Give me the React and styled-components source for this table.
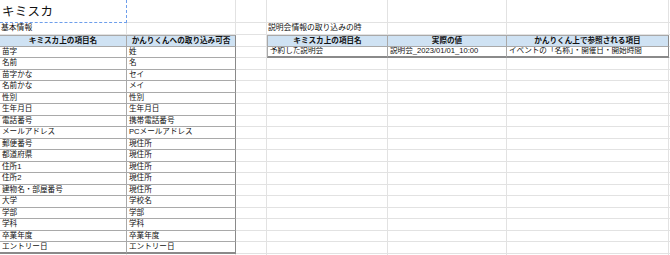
import React from "react";
import styled, { createGlobalStyle, css } from "styled-components";

const Global = createGlobalStyle`
  html, body { margin: 0; padding: 0; background: #ffffff; }
  body { font-family: "Liberation Sans", "Noto Sans CJK JP", sans-serif; }
`;

const GRID = "#e2e2e2";
const RULE = "#a9a9a9";
const EDGE = "#8a8a8a";

const Sheet = styled.div`
  display: grid;
  grid-template-columns: 127px 109px 31px 121px 119px 162px 1fr;
  grid-template-rows: 23px 11.5px 12px repeat(18, 11.5px) 20px;
  width: 670px;
  height: 255px;
  overflow: hidden;
  color: #111;
`;

const Cell = styled.div`
  box-sizing: border-box;
  display: flex;
  align-items: center;
  min-width: 0;
  padding: 0 2px;
  font-size: 7.6px;
  line-height: 1;
  white-space: nowrap;
  overflow: hidden;
  border-right: 1px solid ${GRID};
  border-bottom: 1px solid ${GRID};

  ${(p) =>
    p.$kind === "title" &&
    css`
      font-size: 12.5px;
      align-items: flex-end;
      padding: 0 2px 4px;
      border-right: 1px dashed #6d9eeb;
      border-bottom: 1px dashed #6d9eeb;
      letter-spacing: 0.3px;
    `}

  ${(p) =>
    p.$kind === "label" &&
    css`
      font-size: 7.8px;
      padding-left: 1px;
    `}

  ${(p) =>
    p.$kind === "head" &&
    css`
      background: #cfe2f3;
      font-weight: 700;
      justify-content: center;
      border-top: 1px solid ${RULE};
      border-right-color: ${RULE};
      border-bottom-color: ${RULE};
    `}

  ${(p) =>
    p.$kind === "data" &&
    css`
      border-right-color: ${RULE};
      border-bottom-color: ${RULE};
    `}

  ${(p) => p.$left && css`border-left: 1px solid ${RULE};`}
  ${(p) => p.$edgeRight && css`border-right: 1px solid ${EDGE};`}
  ${(p) => p.$edgeBottom && css`border-bottom: 2px solid ${EDGE};`}
`;

const basic = [
  ["苗字", "姓"],
  ["名前", "名"],
  ["苗字かな", "セイ"],
  ["名前かな", "メイ"],
  ["性別", "性別"],
  ["生年月日", "生年月日"],
  ["電話番号", "携帯電話番号"],
  ["メールアドレス", "PCメールアドレス"],
  ["郵便番号", "現住所"],
  ["都道府県", "現住所"],
  ["住所1", "現住所"],
  ["住所2", "現住所"],
  ["建物名・部屋番号", "現住所"],
  ["大学", "学校名"],
  ["学部", "学部"],
  ["学科", "学科"],
  ["卒業年度", "卒業年度"],
  ["エントリー日", "エントリー日"],
];

const eventHead = ["キミスカ上の項目名", "実際の値", "かんりくん上で参照される項目"];
const eventRow = ["予約した説明会", "説明会_2023/01/01_10:00", "イベントの「名称」・開催日・開始時間"];

function Blank({ n }) {
  return Array.from({ length: n }, (_, i) => <Cell key={i} />);
}

export default function App() {
  return (
    <>
      <Global />
      <Sheet>
        {/* row 1 */}
        <Cell $kind="title">キミスカ</Cell>
        <Blank n={6} />

        {/* row 2 */}
        <Cell $kind="label">基本情報</Cell>
        <Cell />
        <Cell />
        <Cell $kind="label">説明会情報の取り込みの時</Cell>
        <Cell />
        <Cell />
        <Cell />

        {/* row 3: headers */}
        <Cell $kind="head">キミスカ上の項目名</Cell>
        <Cell $kind="head" $edgeRight>かんりくんへの取り込み可否</Cell>
        <Cell />
        {eventHead.map((h, i) => (
          <Cell key={h} $kind="head" $left={i === 0} $edgeRight={i === 2}>
            {h}
          </Cell>
        ))}
        <Cell />

        {basic.map(([a, b], r) => {
          const last = r === basic.length - 1;
          return (
            <React.Fragment key={a}>
              <Cell $kind="data" $edgeBottom={last}>{a}</Cell>
              <Cell $kind="data" $edgeRight $edgeBottom={last}>{b}</Cell>
              <Cell />
              {r === 0 ? (
                eventRow.map((v, i) => (
                  <Cell key={i} $kind="data" $left={i === 0} $edgeRight={i === 2} $edgeBottom>
                    {v}
                  </Cell>
                ))
              ) : (
                <Blank n={3} />
              )}
              <Cell />
            </React.Fragment>
          );
        })}
        <Blank n={7} />
      </Sheet>
    </>
  );
}
